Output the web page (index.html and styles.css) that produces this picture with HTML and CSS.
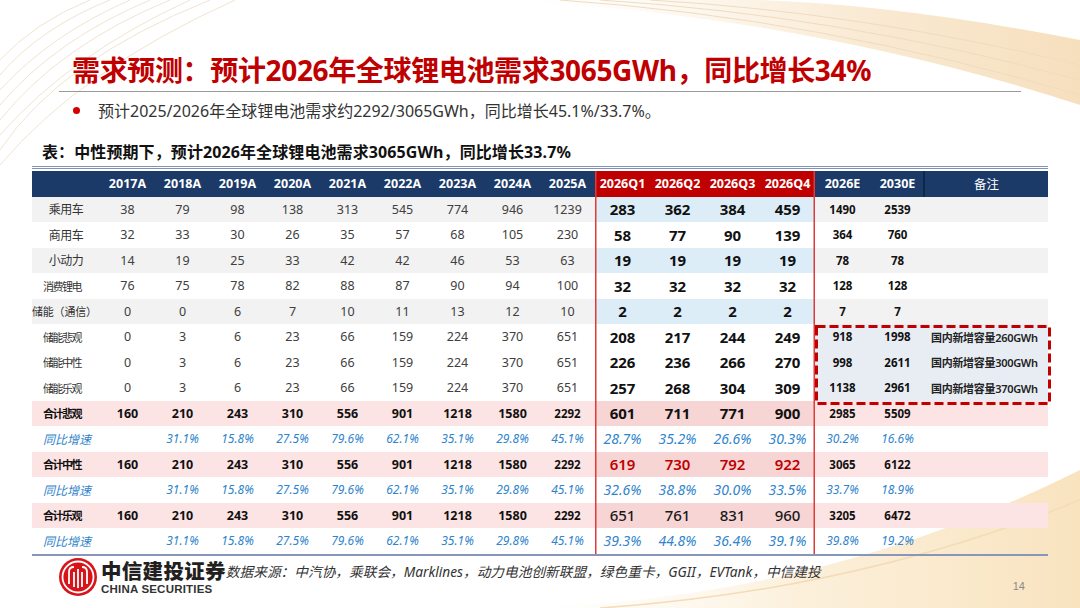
FILE: index.html
```html
<!DOCTYPE html>
<html lang="zh-CN">
<head>
<meta charset="utf-8">
<title>需求预测</title>
<link rel="stylesheet" href="styles.css">
</head>
<body>
<div class="slide">
  <svg class="deco" width="1080" height="608" viewBox="0 0 1080 608" aria-hidden="true">
    <defs>
      <linearGradient id="gb" x1="0" y1="0" x2="1" y2="0">
        <stop offset="0" stop-color="#fff8ec" stop-opacity="0"/>
        <stop offset="0.5" stop-color="#fbecd2" stop-opacity="0.8"/>
        <stop offset="1" stop-color="#f8e0b8" stop-opacity="0.9"/>
      </linearGradient>
      <linearGradient id="gt" x1="0" y1="0" x2="1" y2="0">
        <stop offset="0" stop-color="#fdf3e4" stop-opacity="0"/>
        <stop offset="0.6" stop-color="#f9e8cf" stop-opacity="0.9"/>
        <stop offset="1" stop-color="#f6dfbd" stop-opacity="1"/>
      </linearGradient>
    </defs>
    <g fill="none" stroke="#f1e4d0" stroke-width="1">
      <path d="M0,150 Q60,60 210,0"/>
      <path d="M0,135 Q70,55 190,0"/>
      <path d="M0,120 Q60,45 170,0"/>
      <path d="M0,105 Q55,40 150,0"/>
      <path d="M0,90 Q50,35 130,0"/>
      <path d="M0,75 Q40,28 110,0"/>
      <path d="M0,60 Q35,22 90,0"/>
      <path d="M0,165 Q80,70 235,0"/>
    </g>
    <path d="M520,0 Q820,20 1080,105 L1080,40 Q900,5 760,0 Z" fill="url(#gt)"/>
    <g fill="none" stroke="#efdcc0" stroke-width="1">
      <path d="M560,0 Q820,18 1080,95"/>
      <path d="M600,0 Q840,15 1080,80"/>
      <path d="M650,0 Q860,12 1080,65"/>
    </g>
    <path d="M520,608 Q820,600 1080,470 L1080,608 Z" fill="url(#gb)"/>
    <path d="M600,608 Q860,590 1080,500" fill="none" stroke="#f3dcb6" stroke-width="1.5"/>
  </svg>

  <div class="content">
    <h1 class="title">需求预测：预计2026年全球锂电池需求3065GWh，同比增长34%</h1>
    <div class="rule"></div>
    <div class="bullet"><span class="dot"></span><span>预计2025/2026年全球锂电池需求约2292/3065GWh，同比增长45.1%/33.7%。</span></div>
    <div class="caption">表：中性预期下，预计2026年全球锂电池需求3065GWh，同比增长33.7%</div>

    <div class="tablewrap">
      <table class="data">
        <colgroup>
          <col class="c-label">
          <col span="15" class="c-num">
          <col class="c-note">
        </colgroup>
        <thead>
          <tr>
            <th></th>
            <th>2017A</th><th>2018A</th><th>2019A</th><th>2020A</th><th>2021A</th><th>2022A</th><th>2023A</th><th>2024A</th><th>2025A</th>
            <th class="qh ql">2026Q1</th><th class="qh">2026Q2</th><th class="qh">2026Q3</th><th class="qh qr">2026Q4</th>
            <th>2026E</th><th class="sep">2030E</th><th class="note-h">备注</th>
          </tr>
        </thead>
        <tbody>
          <tr class="gray">
            <td class="lab c3">乘用车</td>
            <td>38</td><td>79</td><td>98</td><td>138</td><td>313</td><td>545</td><td>774</td><td>946</td><td>1239</td>
            <td class="q ql">283</td><td class="q">362</td><td class="q">384</td><td class="q qr">459</td>
            <td class="e">1490</td><td class="e">2539</td><td></td>
          </tr>
          <tr>
            <td class="lab c3">商用车</td>
            <td>32</td><td>33</td><td>30</td><td>26</td><td>35</td><td>57</td><td>68</td><td>105</td><td>230</td>
            <td class="q ql">58</td><td class="q">77</td><td class="q">90</td><td class="q qr">139</td>
            <td class="e">364</td><td class="e">760</td><td></td>
          </tr>
          <tr class="gray">
            <td class="lab c3">小动力</td>
            <td>14</td><td>19</td><td>25</td><td>33</td><td>42</td><td>42</td><td>46</td><td>53</td><td>63</td>
            <td class="q ql">19</td><td class="q">19</td><td class="q">19</td><td class="q qr">19</td>
            <td class="e">78</td><td class="e">78</td><td></td>
          </tr>
          <tr>
            <td class="lab c4">消费锂电</td>
            <td>76</td><td>75</td><td>78</td><td>82</td><td>88</td><td>87</td><td>90</td><td>94</td><td>100</td>
            <td class="q ql">32</td><td class="q">32</td><td class="q">32</td><td class="q qr">32</td>
            <td class="e">128</td><td class="e">128</td><td></td>
          </tr>
          <tr class="gray">
            <td class="lab c6">储能（通信）</td>
            <td>0</td><td>0</td><td>6</td><td>7</td><td>10</td><td>11</td><td>13</td><td>12</td><td>10</td>
            <td class="q ql">2</td><td class="q">2</td><td class="q">2</td><td class="q qr">2</td>
            <td class="e">7</td><td class="e">7</td><td></td>
          </tr>
          <tr>
            <td class="lab c4">储能悲观</td>
            <td>0</td><td>3</td><td>6</td><td>23</td><td>66</td><td>159</td><td>224</td><td>370</td><td>651</td>
            <td class="q ql">208</td><td class="q">217</td><td class="q">244</td><td class="q qr">249</td>
            <td class="e hl">918</td><td class="e hl">1998</td><td class="note hl">国内新增容量260GWh</td>
          </tr>
          <tr>
            <td class="lab c4">储能中性</td>
            <td>0</td><td>3</td><td>6</td><td>23</td><td>66</td><td>159</td><td>224</td><td>370</td><td>651</td>
            <td class="q ql">226</td><td class="q">236</td><td class="q">266</td><td class="q qr">270</td>
            <td class="e hl">998</td><td class="e hl">2611</td><td class="note hl">国内新增容量300GWh</td>
          </tr>
          <tr>
            <td class="lab c4">储能乐观</td>
            <td>0</td><td>3</td><td>6</td><td>23</td><td>66</td><td>159</td><td>224</td><td>370</td><td>651</td>
            <td class="q ql">257</td><td class="q">268</td><td class="q">304</td><td class="q qr">309</td>
            <td class="e hl">1138</td><td class="e hl">2961</td><td class="note hl">国内新增容量370GWh</td>
          </tr>
          <tr class="total">
            <td class="lab c4">合计悲观</td>
            <td>160</td><td>210</td><td>243</td><td>310</td><td>556</td><td>901</td><td>1218</td><td>1580</td><td class="sm">2292</td>
            <td class="q ql">601</td><td class="q">711</td><td class="q">771</td><td class="q qr">900</td>
            <td class="e">2985</td><td class="e">5509</td><td></td>
          </tr>
          <tr class="pct">
            <td class="lab c4">同比增速</td>
            <td></td><td>31.1%</td><td>15.8%</td><td>27.5%</td><td>79.6%</td><td>62.1%</td><td>35.1%</td><td>29.8%</td><td>45.1%</td>
            <td class="q ql">28.7%</td><td class="q">35.2%</td><td class="q">26.6%</td><td class="q qr">30.3%</td>
            <td>30.2%</td><td>16.6%</td><td></td>
          </tr>
          <tr class="total">
            <td class="lab c4">合计中性</td>
            <td>160</td><td>210</td><td>243</td><td>310</td><td>556</td><td>901</td><td>1218</td><td>1580</td><td class="sm">2292</td>
            <td class="q ql red">619</td><td class="q red">730</td><td class="q red">792</td><td class="q qr red">922</td>
            <td class="e">3065</td><td class="e">6122</td><td></td>
          </tr>
          <tr class="pct">
            <td class="lab c4">同比增速</td>
            <td></td><td>31.1%</td><td>15.8%</td><td>27.5%</td><td>79.6%</td><td>62.1%</td><td>35.1%</td><td>29.8%</td><td>45.1%</td>
            <td class="q ql">32.6%</td><td class="q">38.8%</td><td class="q">30.0%</td><td class="q qr">33.5%</td>
            <td>33.7%</td><td>18.9%</td><td></td>
          </tr>
          <tr class="total">
            <td class="lab c4">合计乐观</td>
            <td>160</td><td>210</td><td>243</td><td>310</td><td>556</td><td>901</td><td>1218</td><td>1580</td><td class="sm">2292</td>
            <td class="q ql med">651</td><td class="q med">761</td><td class="q med">831</td><td class="q qr med">960</td>
            <td class="e">3205</td><td class="e">6472</td><td></td>
          </tr>
          <tr class="pct">
            <td class="lab c4">同比增速</td>
            <td></td><td>31.1%</td><td>15.8%</td><td>27.5%</td><td>79.6%</td><td>62.1%</td><td>35.1%</td><td>29.8%</td><td>45.1%</td>
            <td class="q ql">39.3%</td><td class="q">44.8%</td><td class="q">36.4%</td><td class="q qr">39.1%</td>
            <td>39.8%</td><td>19.2%</td><td></td>
          </tr>
        </tbody>
      </table>
      <svg class="dashbox" width="236" height="80" viewBox="0 0 236 80" aria-hidden="true">
        <rect x="1.5" y="1.5" width="233" height="77" fill="none" stroke="#c00000" stroke-width="3" stroke-dasharray="9 4"/>
      </svg>
    </div>

    <div class="footer">
      <div class="logo">
        <svg class="mark" width="40" height="40" viewBox="0 0 40 40" aria-hidden="true">
          <circle cx="20" cy="20" r="19" fill="#d7141a"/>
          <circle cx="20" cy="20" r="15.5" fill="none" stroke="#fff" stroke-width="1.8"/>
          <g fill="none" stroke="#fff" stroke-width="1.8">
            <path d="M11,27 L11,15 Q11,10 16,10"/>
            <path d="M29,27 L29,15 Q29,10 24,10"/>
            <path d="M16,30 L16,15"/>
            <path d="M24,30 L24,15"/>
            <path d="M20,31 L20,12"/>
          </g>
        </svg>
        <div class="brand">
          <div class="cn">中信建投证券</div>
          <div class="en">CHINA SECURITIES</div>
        </div>
      </div>
      <div class="source">数据来源：中汽协，乘联会，Marklines，动力电池创新联盟，绿色重卡，GGII，EVTank，中信建投</div>
      <div class="page">14</div>
    </div>
  </div>
</div>
</body>
</html>
```

FILE: styles.css
```css
html, body {
  margin: 0;
  padding: 0;
}
body {
  width: 1080px;
  height: 608px;
  overflow: hidden;
  background: #ffffff;
  font-family: "Noto Sans", "Noto Sans CJK SC", sans-serif;
  color: #333333;
}
.slide {
  position: relative;
  width: 1080px;
  height: 608px;
  overflow: hidden;
}
.deco {
  position: absolute;
  left: 0;
  top: 0;
  z-index: 0;
}
.content {
  position: relative;
  z-index: 1;
  display: flex;
  flex-direction: column;
}
.title {
  margin: 0;
  padding: 51px 0 0 72px;
  font-size: 28px;
  line-height: 38px;
  font-weight: 700;
  color: #c00000;
  letter-spacing: -0.35px;
}
.rule {
  margin: 2px 0 0 59px;
  width: 962px;
  height: 0;
  border-top: 1px solid #9a9a9a;
}
.bullet {
  display: flex;
  align-items: center;
  margin: 7px 0 0 0;
  padding-left: 73px;
  height: 22px;
  font-size: 16px;
  color: #333333;
}
.dot {
  width: 7px;
  height: 7px;
  border-radius: 50%;
  background: #d40000;
  margin-right: 18px;
}
.caption {
  margin-top: 20px;
  padding-left: 42px;
  height: 22px;
  line-height: 22px;
  font-size: 16px;
  font-weight: 700;
  color: #111111;
  letter-spacing: 0.1px;
}
.tablewrap {
  position: relative;
  margin: 3px 0 0 32px;
  width: 1016px;
  border-top: 3px double #8193b8;
  padding-top: 2px;
  border-bottom: 2px solid #8797b9;
}
.data {
  width: 1016px;
  table-layout: fixed;
  border-collapse: collapse;
  border-spacing: 0;
}
.c-label { width: 68px; }
.c-num { width: 55px; }
.c-note { width: 123px; }
.data th {
  height: 25.5px;
  padding: 0;
  background: #1b3a68;
  color: #ffffff;
  font-size: 12.5px;
  font-weight: 700;
  text-align: center;
}
.data th.qh {
  background: #c00000;
}
.data th.sep {
  box-shadow: inset -2px 0 0 #0e274b;
}
.data th.note-h {
  font-weight: 400;
  font-size: 12.5px;
}
.data td {
  height: 25.5px;
  padding: 0;
  text-align: center;
  font-size: 12.5px;
  color: #404040;
  white-space: nowrap;
}
.ql { box-shadow: inset 1.5px 0 0 #de3b3b; }
.qr { box-shadow: inset -1.5px 0 0 #de3b3b; }
.data tr.gray td { background: #f2f2f2; }
.data tr.gray td.q { background: #dcedf7; }
.data td.q {
  font-size: 15px;
  font-weight: 700;
  color: #111111;
}
.data td.e {
  font-size: 11.5px;
  font-weight: 700;
  color: #111111;
}
.data td.hl { background: #e8edf4; }
.data td.note {
  font-size: 11px;
  font-weight: 600;
  color: #222222;
  text-align: left;
  padding-left: 6px;
  letter-spacing: -0.3px;
}
.lab {
  text-align: left !important;
  padding-left: 11px !important;
  color: #333333 !important;
}
.lab.c3 {
  text-align: center !important;
  padding-left: 0 !important;
  font-size: 12px !important;
  letter-spacing: -0.5px;
}
.lab.c4 {
  font-size: 11px !important;
  letter-spacing: -1.5px;
}
.lab.c6 {
  padding-left: 0 !important;
  font-size: 11px !important;
  letter-spacing: -0.2px;
}
.data tr.total td {
  background: #fde4e4;
  font-weight: 700;
  color: #111111;
}
.data tr.total td.q { background: #f7d5d5; }
.data tr.total td.sm { font-size: 11.5px; }
.data tr.total td.red { color: #c00000; font-weight: 600; }
.data tr.total td.med { font-weight: 500; color: #1a1a1a; }
.data tr.total td.lab { color: #111111 !important; }
.data tr.pct td {
  font-style: italic;
  color: #2f84cc;
  font-size: 12px;
}
.data tr.pct td.q { font-size: 14px; font-weight: 400; }
.data tr.pct td.lab {
  color: #2f84cc !important;
  font-size: 12px !important;
  letter-spacing: 0;
}
.dashbox {
  position: absolute;
  left: 783px;
  top: 156px;
}
.footer {
  display: flex;
  align-items: flex-start;
  margin-top: 0;
  height: 55px;
  position: relative;
}
.logo {
  display: flex;
  align-items: center;
  margin: 1px 0 0 58px;
}
.mark { flex: none; }
.brand {
  margin-left: 3px;
  display: flex;
  flex-direction: column;
}
.brand .cn {
  font-family: "Noto Sans CJK SC", sans-serif;
  font-size: 20.5px;
  font-weight: 900;
  line-height: 22px;
  color: #231f20;
  letter-spacing: 0.3px;
}
.brand .en {
  margin-top: 2px;
  font-family: "Liberation Sans", Arial, sans-serif;
  font-size: 11.5px;
  font-weight: 700;
  line-height: 12px;
  color: #333333;
  letter-spacing: 0.2px;
}
.source {
  margin-top: 5px;
  font-size: 13.7px;
  font-style: italic;
  color: #333333;
  white-space: nowrap;
}
.page {
  margin-left: auto;
  margin-right: 55px;
  margin-top: 24px;
  font-family: "Liberation Sans", Arial, sans-serif;
  font-size: 11px;
  color: #8a8a8a;
}
```
